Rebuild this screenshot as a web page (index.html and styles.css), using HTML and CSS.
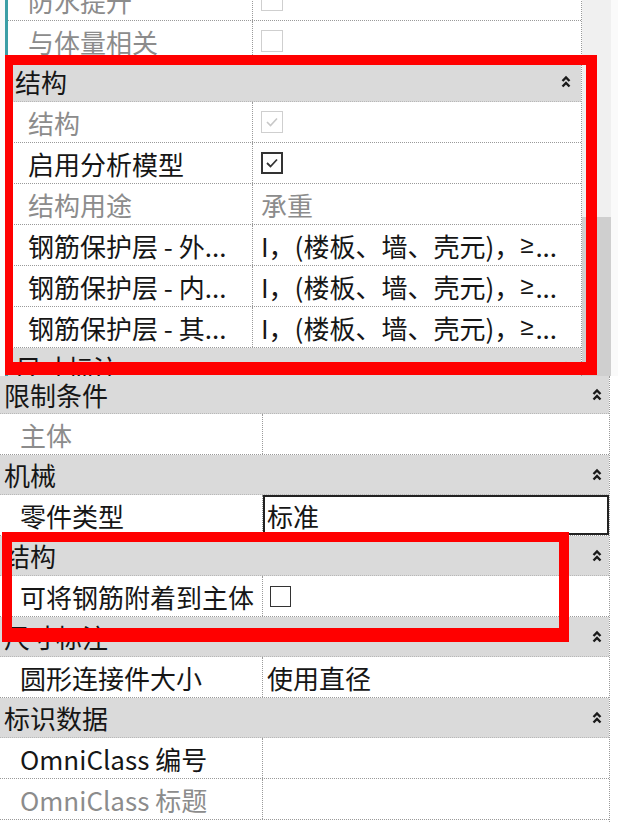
FILE: index.html
```html
<!DOCTYPE html>
<html>
<head>
    <meta charset="UTF-8">
    <meta name="viewport" content="width=device-width, initial-scale=1.0">
    <title>属性</title>
    <link rel="stylesheet" href="styles.css">
</head>
<body>
    <!-- 上半部分：墙属性 -->
    <div class="shot shot-top">
        <div class="edge"></div>
        <div class="props">
            <div class="row">
                <div class="name muted">防水提升</div>
                <div class="value"><span class="box off"></span></div>
            </div>
            <div class="row">
                <div class="name muted">与体量相关</div>
                <div class="value"><span class="box off"></span></div>
            </div>
            <div class="group">
                <span>结构</span>
                <svg class="fold" width="10" height="13" viewBox="0 0 10 13"><path d="M1.5 6 L5 2.5 L8.5 6 M1.5 11.5 L5 8 L8.5 11.5" fill="none" stroke="#1a1a1a" stroke-width="2.4"/></svg>
            </div>
            <div class="row">
                <div class="name muted">结构</div>
                <div class="value">
                    <span class="box off"><svg width="16" height="16" viewBox="0 0 16 16"><path d="M3 8 L6.5 11.5 L13 4.5" fill="none" stroke="#c8c8c8" stroke-width="1.6"/></svg></span>
                </div>
            </div>
            <div class="row">
                <div class="name">启用分析模型</div>
                <div class="value">
                    <span class="box"><svg width="16" height="16" viewBox="0 0 16 16"><path d="M3 8 L6.5 11.5 L13 4.5" fill="none" stroke="#333" stroke-width="1.8"/></svg></span>
                </div>
            </div>
            <div class="row">
                <div class="name muted">结构用途</div>
                <div class="value muted">承重</div>
            </div>
            <div class="row">
                <div class="name">钢筋保护层 - 外...</div>
                <div class="value">I，(楼板、墙、壳元)，<span class="sym">≥</span>...</div>
            </div>
            <div class="row">
                <div class="name">钢筋保护层 - 内...</div>
                <div class="value">I，(楼板、墙、壳元)，<span class="sym">≥</span>...</div>
            </div>
            <div class="row">
                <div class="name">钢筋保护层 - 其...</div>
                <div class="value">I，(楼板、墙、壳元)，<span class="sym">≥</span>...</div>
            </div>
            <div class="group">
                <span>尺寸标注</span>
                <svg class="fold" width="10" height="13" viewBox="0 0 10 13"><path d="M1.5 6 L5 2.5 L8.5 6 M1.5 11.5 L5 8 L8.5 11.5" fill="none" stroke="#1a1a1a" stroke-width="2.4"/></svg>
            </div>
        </div>
        <div class="scroll"><div class="thumb"></div></div>
    </div>

    <!-- 下半部分：连接件属性 -->
    <div class="shot shot-bottom">
        <div class="props">
            <div class="group first">
                <span>限制条件</span>
                <svg class="fold" width="10" height="13" viewBox="0 0 10 13"><path d="M1.5 6 L5 2.5 L8.5 6 M1.5 11.5 L5 8 L8.5 11.5" fill="none" stroke="#1a1a1a" stroke-width="2.4"/></svg>
            </div>
            <div class="row">
                <div class="name muted">主体</div>
                <div class="value"></div>
            </div>
            <div class="group">
                <span>机械</span>
                <svg class="fold" width="10" height="13" viewBox="0 0 10 13"><path d="M1.5 6 L5 2.5 L8.5 6 M1.5 11.5 L5 8 L8.5 11.5" fill="none" stroke="#1a1a1a" stroke-width="2.4"/></svg>
            </div>
            <div class="row">
                <div class="name">零件类型</div>
                <div class="value input">标准</div>
            </div>
            <div class="group">
                <span>结构</span>
                <svg class="fold" width="10" height="13" viewBox="0 0 10 13"><path d="M1.5 6 L5 2.5 L8.5 6 M1.5 11.5 L5 8 L8.5 11.5" fill="none" stroke="#1a1a1a" stroke-width="2.4"/></svg>
            </div>
            <div class="row">
                <div class="name">可将钢筋附着到主体</div>
                <div class="value"><span class="box thin"></span></div>
            </div>
            <div class="group">
                <span>尺寸标注</span>
                <svg class="fold" width="10" height="13" viewBox="0 0 10 13"><path d="M1.5 6 L5 2.5 L8.5 6 M1.5 11.5 L5 8 L8.5 11.5" fill="none" stroke="#1a1a1a" stroke-width="2.4"/></svg>
            </div>
            <div class="row">
                <div class="name">圆形连接件大小</div>
                <div class="value">使用直径</div>
            </div>
            <div class="group">
                <span>标识数据</span>
                <svg class="fold" width="10" height="13" viewBox="0 0 10 13"><path d="M1.5 6 L5 2.5 L8.5 6 M1.5 11.5 L5 8 L8.5 11.5" fill="none" stroke="#1a1a1a" stroke-width="2.4"/></svg>
            </div>
            <div class="row">
                <div class="name">OmniClass 编号</div>
                <div class="value"></div>
            </div>
            <div class="row">
                <div class="name muted">OmniClass 标题</div>
                <div class="value"></div>
            </div>
        </div>
    </div>

    <!-- 红色标注框 -->
    <div class="mark mark-top"></div>
    <div class="mark mark-bottom"></div>
</body>
</html>
```

FILE: styles.css
```css
* {
    box-sizing: border-box;
}

body {
    margin: 0;
    width: 618px;
    height: 822px;
    overflow: hidden;
    position: relative;
    background: #fff;
    font-family: "Noto Sans CJK SC", "Noto Sans", sans-serif;
    font-size: 26px;
    color: #161616;
}

.shot {
    display: flex;
    overflow: hidden;
}

.shot-top {
    height: 376px;
    background: #fafafa;
}

.edge {
    width: 3px;
    margin-left: 5px;
    background: #3b9ea6;
}

.props {
    background: #fff;
}

.shot-top .props {
    width: 574px;
    margin-top: -20px;
    border-right: 1px dotted #9a9a9a;
}

.scroll {
    width: 29px;
    display: flex;
    flex-direction: column;
    background: #f0f0f0;
}

.thumb {
    margin-top: 217px;
    flex: 1;
    background: #cfcfcf;
}

.shot-bottom {
    height: 446px;
}

.shot-bottom .props {
    width: 610px;
    border-right: 1px dotted #9a9a9a;
}

.row {
    display: grid;
    grid-template-columns: 245px 1fr;
    height: 41px;
    border-bottom: 1px dotted #9a9a9a;
}

.shot-bottom .row {
    grid-template-columns: 263px 1fr;
}

.name {
    display: flex;
    align-items: center;
    padding-left: 20px;
    border-right: 1px dotted #9a9a9a;
    white-space: nowrap;
    overflow: hidden;
}

.value {
    display: flex;
    align-items: center;
    padding-left: 8px;
    white-space: nowrap;
    overflow: hidden;
}

.shot-bottom .value {
    padding-left: 4px;
}

.value.input {
    border: 2px solid #222;
    padding-left: 2px;
}

.sym {
    font-family: "Liberation Sans", sans-serif;
    font-size: 24px;
    margin-right: 2px;
}

.muted {
    color: #8c8c8c;
}

.group {
    display: flex;
    align-items: center;
    justify-content: space-between;
    height: 40px;
    padding: 0 10px 0 7px;
    background: #dadada;
    border-bottom: 1px dotted #b8b8b8;
}

.shot-bottom .group {
    padding: 0 7px 0 4px;
}

.shot-bottom .group.first {
    height: 38px;
}

.fold {
    display: block;
}

.box {
    width: 22px;
    height: 22px;
    border: 2px solid #333;
    display: flex;
    align-items: center;
    justify-content: center;
}

.box.off {
    border: 1.5px solid #cfcfcf;
}

.box.thin {
    width: 21px;
    height: 21px;
    margin-left: 3px;
    border: 1.5px solid #333;
}

.mark {
    position: absolute;
    border: 10px solid #ff0000;
}

.mark-top {
    left: 5px;
    top: 55px;
    width: 592px;
    height: 320px;
    border-width: 10px 11px 13px 8px;
}

.mark-bottom {
    left: 2px;
    top: 532px;
    width: 567px;
    height: 110px;
    border-width: 10px 10px 14px 10px;
}
```
